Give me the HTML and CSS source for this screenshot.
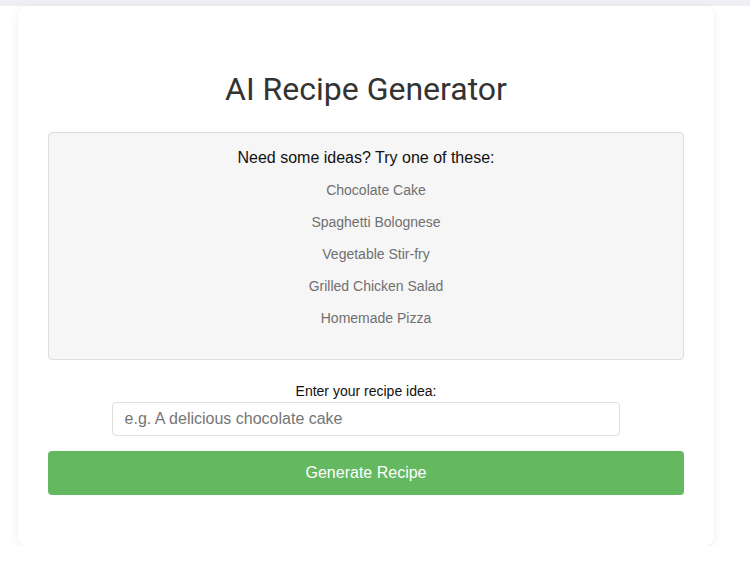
FILE: index.html
```html
<!DOCTYPE html>
<html lang="en">
<head>
  <meta charset="UTF-8">
  <meta name="viewport" content="width=device-width, initial-scale=1.0">
  <title>AI Recipe Generator</title>
  <link rel="stylesheet" href="styles.css">
</head>
<body>
  <div class="top-strip"></div>

  <div class="container">
    <h1 class="title">AI Recipe Generator</h1>

    <div class="suggestions">
      <p class="suggestions-title">Need some ideas? Try one of these:</p>
      <ul class="suggestion-list">
        <li>Chocolate Cake</li>
        <li>Spaghetti Bolognese</li>
        <li>Vegetable Stir-fry</li>
        <li>Grilled Chicken Salad</li>
        <li>Homemade Pizza</li>
      </ul>
    </div>

    <form class="recipe-form" onsubmit="return false">
      <label class="form-label" for="recipe-idea">Enter your recipe idea:</label>
      <input class="form-input" id="recipe-idea" type="text" placeholder="e.g. A delicious chocolate cake">
      <button class="generate-button" type="submit">Generate Recipe</button>
    </form>
  </div>
</body>
</html>
```

FILE: styles.css
```css
body, html {
  margin: 0;
  padding: 0;
  font-family: "Liberation Sans", Arial, sans-serif;
  background-color: #ffffff;
}

.top-strip {
  height: 6px;
  background-color: #efeef5;
}

.container {
  width: 636px;
  margin: 0 0 0 18px;
  padding: 30px 30px 31px;
  background-color: white;
  border-radius: 10px;
  box-shadow: 0 2px 10px rgba(0,0,0,0.07);
  text-align: center;
}

.title {
  font-family: Roboto, "Liberation Sans", sans-serif;
  font-size: 32px;
  font-weight: 400;
  line-height: 38px;
  color: #333;
  margin: 34px 0 24px;
}

.suggestions {
  background-color: #f6f6f6;
  border: 1px solid #dddddd;
  border-radius: 4px;
  padding: 15px 15px 17px;
}

.suggestions-title {
  margin: 0;
  font-size: 16px;
  line-height: 20px;
  color: #111;
}

.suggestion-list {
  list-style: none;
  margin: 14px 0 0;
  padding: 0 0 0 20px;
}

.suggestion-list li {
  font-size: 14px;
  line-height: 16px;
  color: #707070;
  margin-bottom: 16px;
  cursor: pointer;
}

.recipe-form {
  display: flex;
  flex-direction: column;
  align-items: center;
  margin-top: 23px;
}

.form-label {
  font-size: 14px;
  line-height: 16px;
  color: #111;
  margin-bottom: 3px;
}

.form-input {
  box-sizing: border-box;
  width: 80%;
  height: 34px;
  padding: 0 12px;
  border: 1px solid #dddddd;
  border-radius: 4px;
  font-family: "Liberation Sans", Arial, sans-serif;
  font-size: 16px;
  color: #333;
  outline: none;
}

.form-input::placeholder {
  color: #757575;
}

.generate-button {
  width: 100%;
  height: 44px;
  margin: 15px 0 20px;
  background-color: #64b860;
  color: white;
  border: none;
  border-radius: 4px;
  font-family: "Liberation Sans", Arial, sans-serif;
  font-size: 16px;
  cursor: pointer;
}

.generate-button:hover {
  background-color: #57a653;
}
```
